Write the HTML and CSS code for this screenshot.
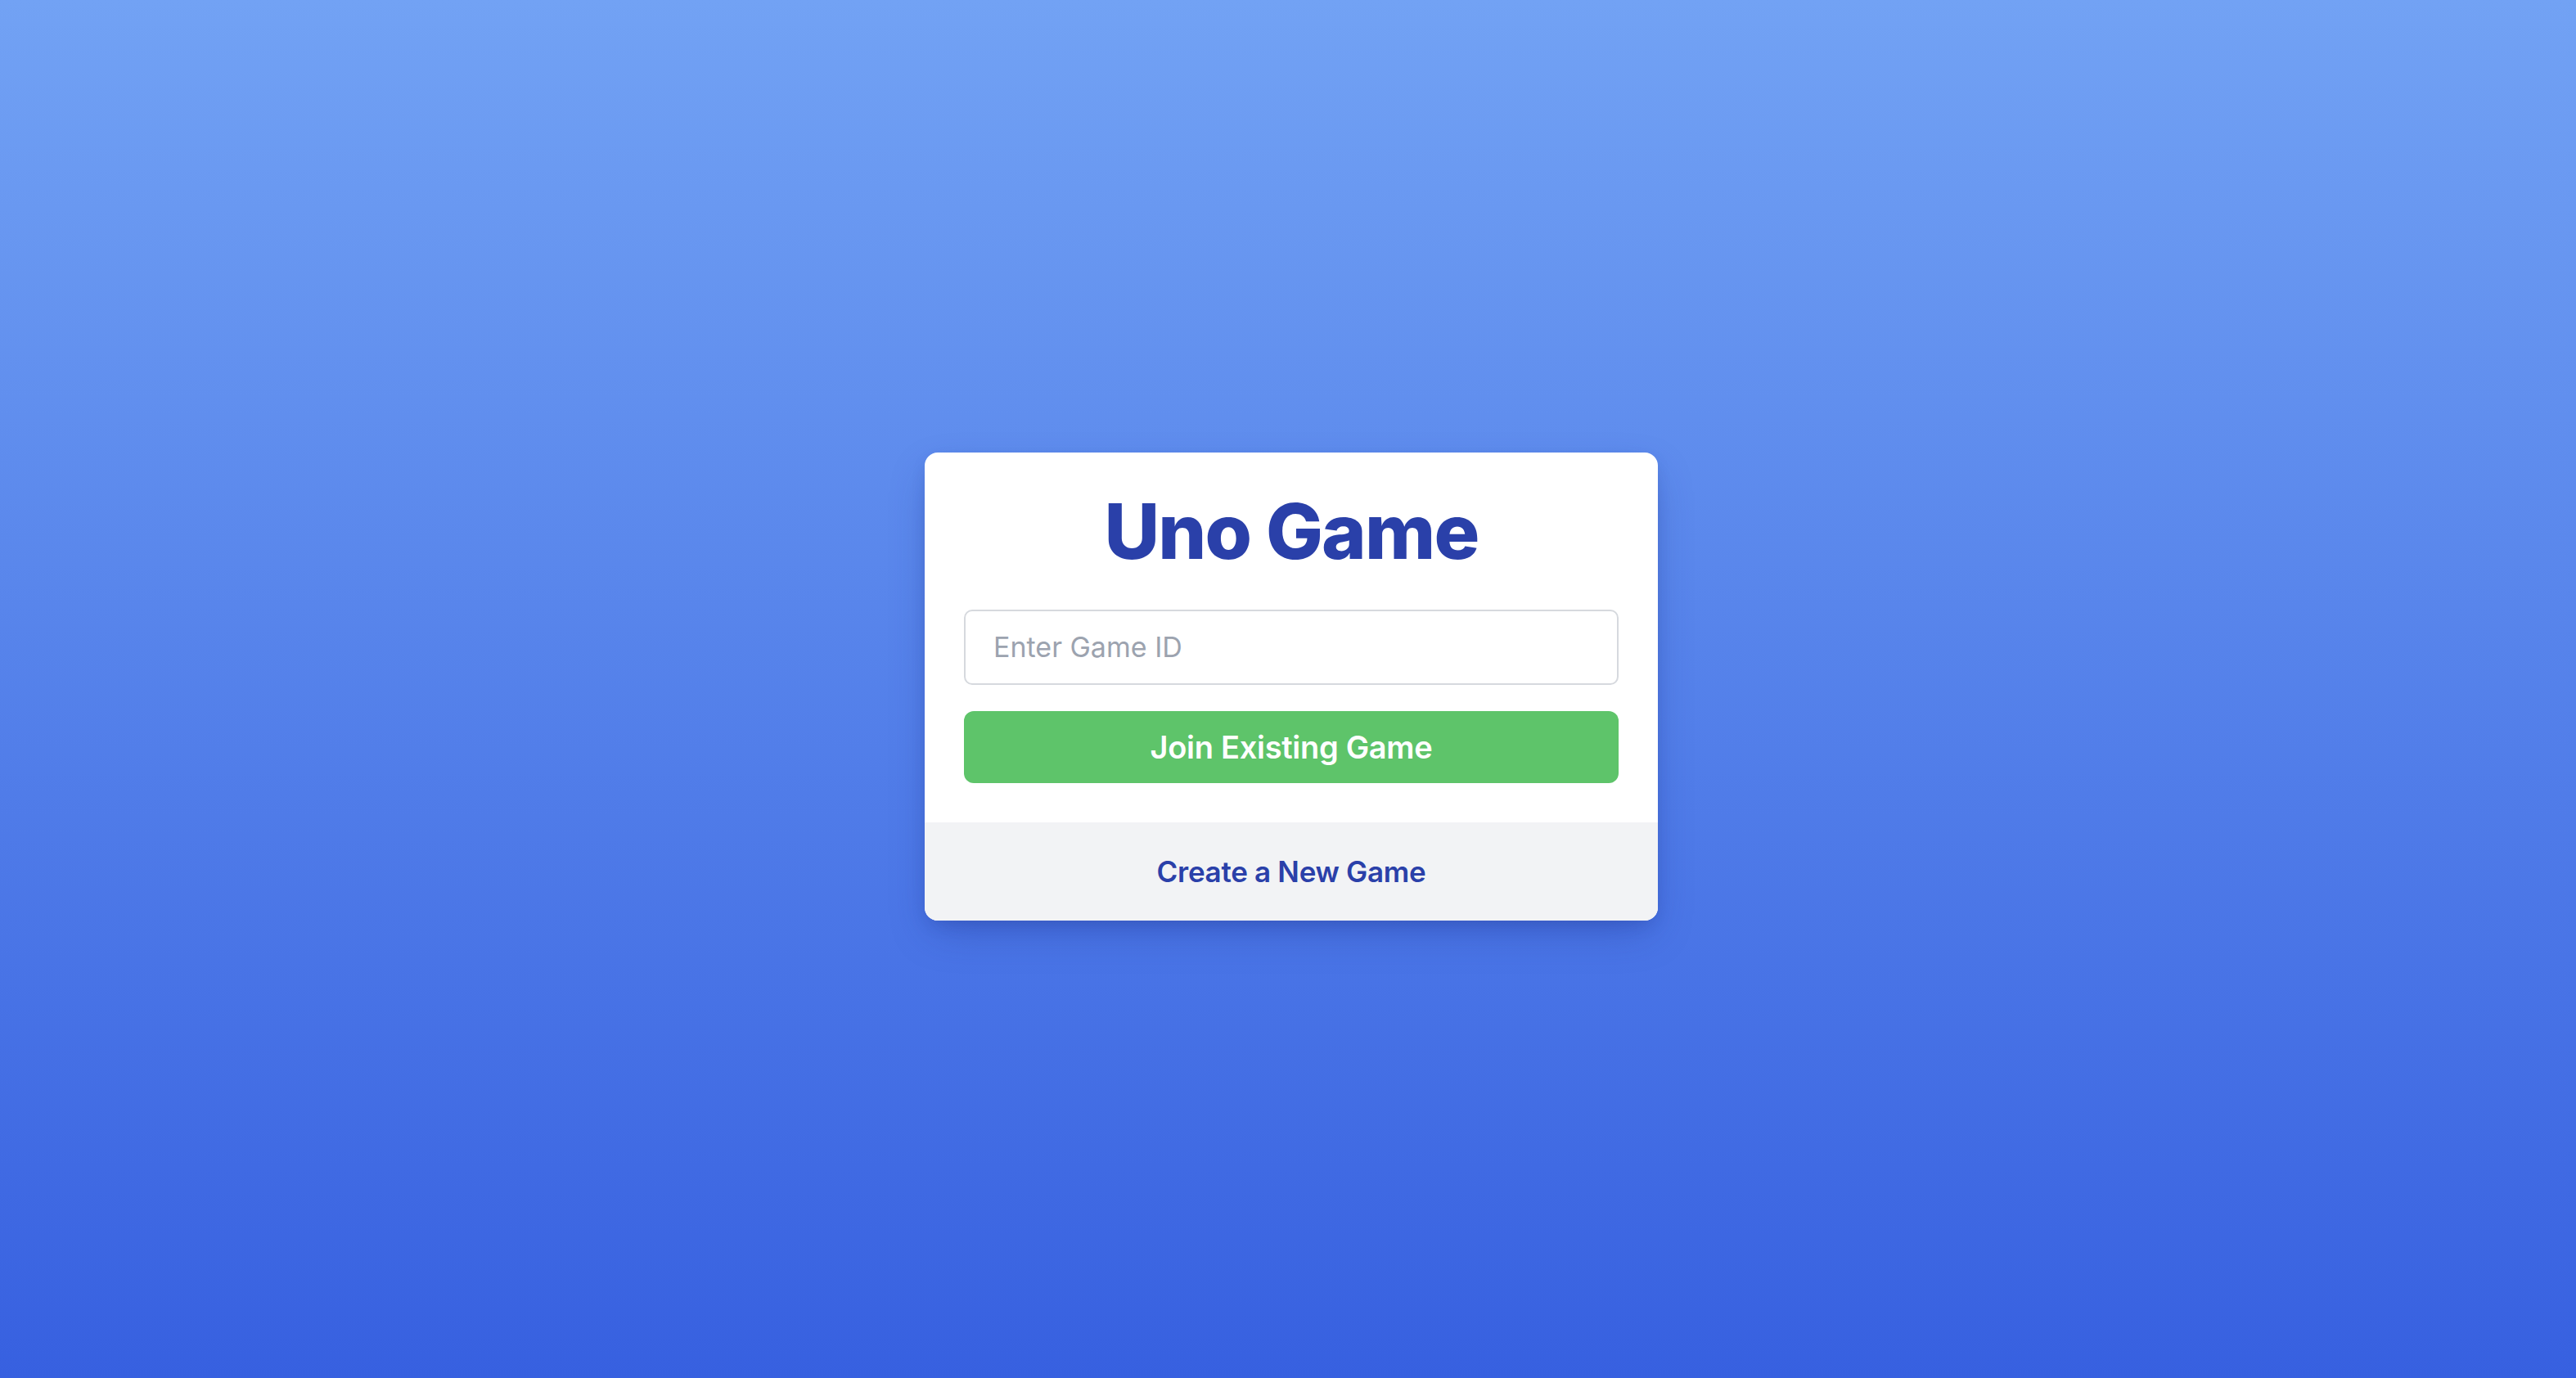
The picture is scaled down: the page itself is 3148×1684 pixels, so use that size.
FILE: index.html
```html
<!DOCTYPE html>
<html lang="en">
<head>
<meta charset="utf-8">
<title>Uno Game</title>
<link rel="stylesheet" href="styles.css">
</head>
<body>
<main class="page">
  <section class="card">
    <div class="card-body">
      <h1 class="title">Uno Game</h1>
      <input class="game-input" type="text" placeholder="Enter Game ID">
      <button class="join-btn" type="button">Join Existing Game</button>
    </div>
    <div class="card-footer">
      <button class="create-link" type="button">Create a New Game</button>
    </div>
  </section>
</main>
</body>
</html>
```

FILE: styles.css
```css
* {
  box-sizing: border-box;
}

html, body {
  margin: 0;
  padding: 0;
  height: 100%;
}

body {
  font-family: Inter, "Noto Sans", "Liberation Sans", sans-serif;
  background: linear-gradient(180deg, #72a2f4 0%, #3760e0 100%);
  min-height: 100vh;
}

.page {
  min-height: 100vh;
  display: flex;
  align-items: center;
  justify-content: center;
  padding: 0 0 7px 8px;
}

.card {
  width: 896px;
  background: #ffffff;
  border-radius: 16px;
  overflow: hidden;
  box-shadow: 0 20px 50px -10px rgba(30, 50, 140, 0.35), 0 8px 20px -6px rgba(30, 50, 140, 0.25);
}

.card-body {
  padding: 48px 48px 48px;
  display: flex;
  flex-direction: column;
}

.title {
  margin: 0 0 48px;
  font-size: 93px;
  line-height: 96px;
  font-weight: 800;
  color: #2a40a9;
  text-align: center;
  letter-spacing: -1.8px;
}

.game-input {
  height: 92px;
  width: 100%;
  border: 2px solid #d6d9de;
  border-radius: 10px;
  padding: 0 34px;
  font-family: inherit;
  font-size: 34px;
  color: #1f2937;
  background: #fff;
  outline: none;
  margin: 0 0 32px;
}

.game-input::placeholder {
  color: #9ca3af;
}

.join-btn {
  height: 88px;
  width: 100%;
  border: none;
  border-radius: 12px;
  background: #5ec46a;
  color: #ffffff;
  font-family: inherit;
  font-size: 38px;
  font-weight: 600;
  letter-spacing: -0.3px;
  cursor: pointer;
}

.card-footer {
  background: #f2f3f5;
  height: 120px;
  display: flex;
  align-items: center;
  justify-content: center;
}

.create-link {
  border: none;
  background: transparent;
  font-family: inherit;
  font-size: 35px;
  font-weight: 600;
  letter-spacing: -0.3px;
  color: #2a40a9;
  cursor: pointer;
  padding: 0;
}
```
